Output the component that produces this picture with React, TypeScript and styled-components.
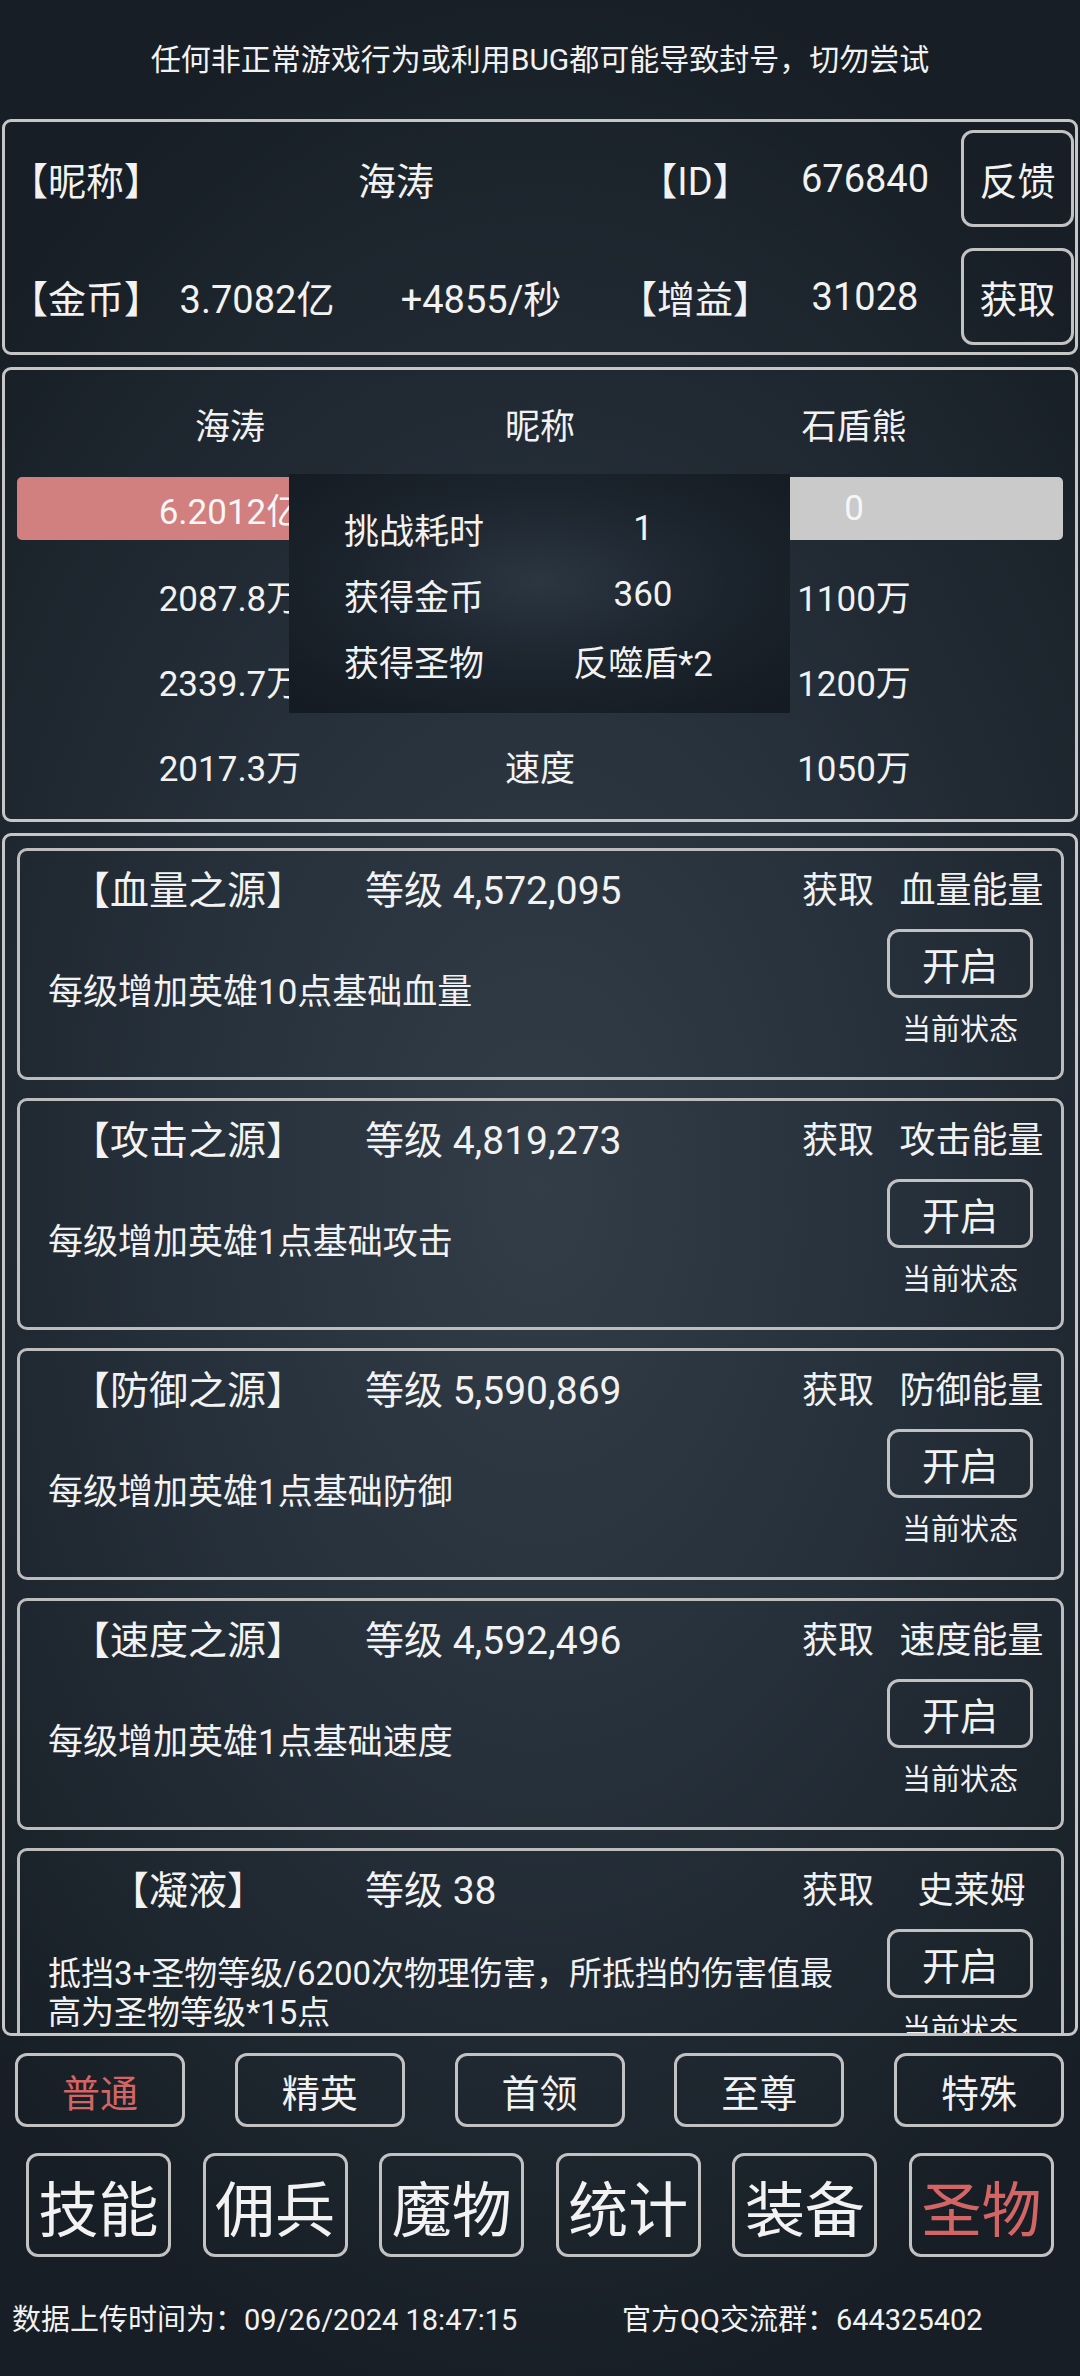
import React from "react";
import styled, { createGlobalStyle } from "styled-components";

const GlobalStyle = createGlobalStyle`
  html, body {
    margin: 0;
    padding: 0;
    background: #161d24;
  }
  body {
    font-family: Roboto, "Noto Sans CJK SC", sans-serif;
    color: #f2f2f2;
  }
`;

const Screen = styled.div`
  width: 1080px;
  height: 2376px;
  overflow: hidden;
  display: flex;
  flex-direction: column;
  background: radial-gradient(ellipse 72% 52% at 50% 50%, #323d48 0%, #26303a 48%, #171e25 100%);
`;

const Notice = styled.div`
  height: 119px;
  flex: none;
  box-sizing: border-box;
  padding-bottom: 5px;
  display: flex;
  align-items: center;
  justify-content: center;
  font-size: 30px;
`;

const Panel = styled.div<{ $height: number }>`
  position: relative;
  flex: none;
  height: ${(p) => p.$height}px;
  margin: 0 2px;
  box-sizing: border-box;
  border: 3px solid #c6c6c6;
  border-radius: 9px;
`;

/* ---------- player info ---------- */

const InfoPanel = styled(Panel)`
  padding: 8px 6px 0 5px;
  display: flex;
  flex-direction: column;
  gap: 21px;
`;

const InfoRow = styled.div`
  height: 97px;
  display: grid;
  grid-template-columns: 140px 214px 234px 194px 146px 113px;
  align-items: center;
  font-size: 38px;
  white-space: nowrap;
`;

const InfoCell = styled.div<{ $span?: number; $shift?: number }>`
  grid-column: span ${(p) => p.$span ?? 1};
  text-align: center;
  padding-left: ${(p) => p.$shift ?? 0}px;
`;

const FrameButton = styled.div<{ $w: number; $h: number; $size: number; $active?: boolean }>`
  width: ${(p) => p.$w}px;
  height: ${(p) => p.$h}px;
  box-sizing: border-box;
  border: 3px solid #c2c2c2;
  border-radius: 12px;
  display: flex;
  align-items: center;
  justify-content: center;
  font-size: ${(p) => p.$size}px;
  color: ${(p) => (p.$active ? "#d46565" : "#f2f2f2")};
  white-space: nowrap;
`;

const SideButton = styled(FrameButton)`
  margin-left: 23px;
`;

/* ---------- battle ---------- */

const BattlePanel = styled(Panel)`
  margin-top: 12px;
  padding: 0 12px;
`;

const StatRow = styled.div<{ $h: number }>`
  height: ${(p) => p.$h}px;
  display: grid;
  grid-template-columns: 426px 194px 1fr;
  align-items: center;
  font-size: 35px;
  white-space: nowrap;
  text-align: center;
  & > div:last-child {
    padding-left: 8px;
  }
`;

const HpRow = styled(StatRow)`
  border-radius: 5px;
  margin-bottom: 13px;
  color: #f6f6f6;
`;

const ResultBox = styled.div`
  position: absolute;
  left: 284px;
  top: 104px;
  width: 501px;
  height: 239px;
  box-sizing: border-box;
  padding: 21px 0 0 55px;
  background: radial-gradient(ellipse 70% 70% at 50% 45%, #2b3641 0%, #1b232c 55%, #141b22 100%);
`;

const ResultRow = styled.div`
  height: 66px;
  display: grid;
  grid-template-columns: 170px 258px;
  align-items: center;
  font-size: 35px;
  white-space: nowrap;
  & > div:last-child {
    text-align: center;
  }
`;

/* ---------- relic list ---------- */

const ListPanel = styled(Panel)`
  margin-top: 11px;
  padding: 12px 11px 0 12px;
  overflow: hidden;
  display: flex;
  flex-direction: column;
  gap: 18px;
`;

const Card = styled.div`
  flex: none;
  height: 232px;
  box-sizing: border-box;
  border: 3px solid #bdbdbd;
  border-radius: 10px;
  display: flex;
  flex-direction: column;
`;

const CardHead = styled.div`
  height: 72px;
  flex: none;
  display: grid;
  grid-template-columns: 336px 446px 86px 167px;
  align-items: center;
  font-size: 39px;
  white-space: nowrap;
`;

const CardTitle = styled.div`
  text-align: center;
`;

const CardLevel = styled.div`
  padding-left: 9px;
`;

const CardGet = styled.div`
  font-size: 36px;
`;

const CardSource = styled.div`
  font-size: 36px;
  text-align: center;
`;

const CardBody = styled.div`
  flex: 1;
  display: flex;
  padding-bottom: 29px;
`;

const Desc = styled.div<{ $small?: boolean }>`
  flex: 1;
  align-self: center;
  padding: 15px 30px 0 28px;
  font-size: ${(p) => (p.$small ? 33 : 35)}px;
  line-height: ${(p) => (p.$small ? "39px" : "42px")};
`;

const CardSide = styled.div`
  width: 180px;
  margin-right: 11px;
  padding-top: 6px;
  display: flex;
  flex-direction: column;
  align-items: center;
`;

const StateText = styled.div`
  margin-top: 14px;
  font-size: 29px;
  line-height: 36px;
  white-space: nowrap;
`;

/* ---------- bottom ---------- */

const ModeRow = styled.div`
  margin-top: 17px;
  padding: 0 16px 0 15px;
  display: flex;
  justify-content: space-between;
`;

const NavRow = styled.div`
  margin-top: 26px;
  padding: 0 26px;
  display: flex;
  justify-content: space-between;
`;

const Footer = styled.div`
  margin-top: 39px;
  height: 40px;
  padding-left: 12px;
  display: grid;
  grid-template-columns: 610px auto;
  align-items: center;
  font-size: 29px;
  white-space: nowrap;
`;

const playerName = "海涛";

const stats = [
  ["2087.8万", "攻击", "1100万"],
  ["2339.7万", "防御", "1200万"],
  ["2017.3万", "速度", "1050万"],
];

const relics = [
  { title: "【血量之源】", level: "4,572,095", source: "血量能量", desc: "每级增加英雄10点基础血量" },
  { title: "【攻击之源】", level: "4,819,273", source: "攻击能量", desc: "每级增加英雄1点基础攻击" },
  { title: "【防御之源】", level: "5,590,869", source: "防御能量", desc: "每级增加英雄1点基础防御" },
  { title: "【速度之源】", level: "4,592,496", source: "速度能量", desc: "每级增加英雄1点基础速度" },
  {
    title: "【凝液】",
    level: "38",
    source: "史莱姆",
    desc: "抵挡3+圣物等级/6200次物理伤害，所抵挡的伤害值最高为圣物等级*15点",
    small: true,
  },
];

const modes = ["普通", "精英", "首领", "至尊", "特殊"];
const navs = ["技能", "佣兵", "魔物", "统计", "装备", "圣物"];

export default function App() {
  const myHp = 1;
  const hpSplit = 50 * myHp;

  return (
    <Screen>
      <GlobalStyle />
      <Notice>任何非正常游戏行为或利用BUG都可能导致封号，切勿尝试</Notice>

      <InfoPanel $height={236}>
        <InfoRow>
          <InfoCell>【昵称】</InfoCell>
          <InfoCell $span={2} $shift={44}>{playerName}</InfoCell>
          <InfoCell>【ID】</InfoCell>
          <InfoCell>676840</InfoCell>
          <SideButton $w={113} $h={97} $size={38}>反馈</SideButton>
        </InfoRow>
        <InfoRow>
          <InfoCell>【金币】</InfoCell>
          <InfoCell>3.7082亿</InfoCell>
          <InfoCell>+4855/秒</InfoCell>
          <InfoCell>【增益】</InfoCell>
          <InfoCell>31028</InfoCell>
          <SideButton $w={113} $h={97} $size={38}>获取</SideButton>
        </InfoRow>
      </InfoPanel>

      <BattlePanel $height={455}>
        <StatRow $h={107}>
          <div>{playerName}</div>
          <div>昵称</div>
          <div>石盾熊</div>
        </StatRow>
        <HpRow
          $h={63}
          style={{
            background: `linear-gradient(to right, #d17f7f 0 ${hpSplit}%, #cacaca ${hpSplit}% 100%)`,
          }}
        >
          <div>6.2012亿</div>
          <div>血量</div>
          <div>0</div>
        </HpRow>
        {stats.map((s) => (
          <StatRow $h={85} key={s[1]}>
            <div>{s[0]}</div>
            <div>{s[1]}</div>
            <div>{s[2]}</div>
          </StatRow>
        ))}
        <ResultBox>
          <ResultRow>
            <div>挑战耗时</div>
            <div>1</div>
          </ResultRow>
          <ResultRow>
            <div>获得金币</div>
            <div>360</div>
          </ResultRow>
          <ResultRow>
            <div>获得圣物</div>
            <div>反噬盾*2</div>
          </ResultRow>
        </ResultBox>
      </BattlePanel>

      <ListPanel $height={1203}>
        {relics.map((r) => (
          <Card key={r.title}>
            <CardHead>
              <CardTitle>{r.title}</CardTitle>
              <CardLevel>等级 {r.level}</CardLevel>
              <CardGet>获取</CardGet>
              <CardSource>{r.source}</CardSource>
            </CardHead>
            <CardBody>
              <Desc $small={r.small}>{r.desc}</Desc>
              <CardSide>
                <FrameButton $w={146} $h={69} $size={38}>开启</FrameButton>
                <StateText>当前状态</StateText>
              </CardSide>
            </CardBody>
          </Card>
        ))}
      </ListPanel>

      <ModeRow>
        {modes.map((m, i) => (
          <FrameButton key={m} $w={170} $h={74} $size={38} $active={i === 0}>
            {m}
          </FrameButton>
        ))}
      </ModeRow>

      <NavRow>
        {navs.map((n, i) => (
          <FrameButton key={n} $w={145} $h={104} $size={60} $active={i === navs.length - 1}>
            {n}
          </FrameButton>
        ))}
      </NavRow>

      <Footer>
        <div>数据上传时间为：09/26/2024 18:47:15</div>
        <div>官方QQ交流群：644325402</div>
      </Footer>
    </Screen>
  );
}
